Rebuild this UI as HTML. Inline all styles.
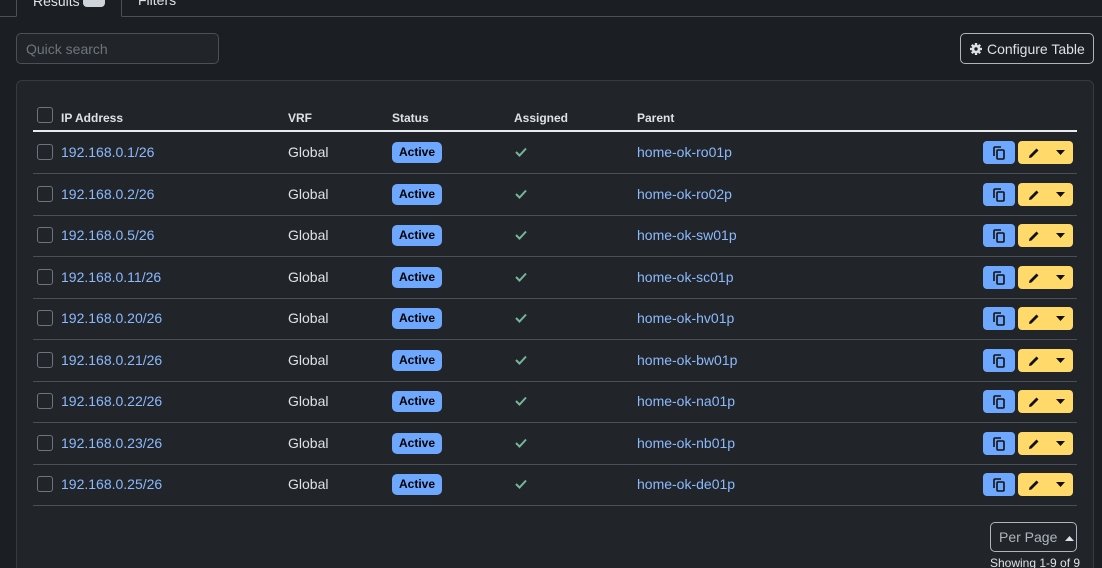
<!DOCTYPE html>
<html><head><meta charset="utf-8"><style>
*{box-sizing:border-box;margin:0;padding:0}
html,body{width:1102px;height:568px;overflow:hidden}
body{background:#1b1e22;font-family:"Liberation Sans",sans-serif;color:#dee2e6;position:relative;font-size:14px}
.tabline{position:absolute;left:0;top:16px;width:1102px;height:1px;background:#495057}
.tab{position:absolute;left:16px;top:-10px;width:106px;height:27px;border:1px solid #495057;border-bottom:1px solid #1b1e22;border-radius:4px 4px 0 0;background:#1b1e22}
.tab span{position:absolute;left:16px;top:2px;color:#dee2e6}
.badge9{position:absolute;left:66px;top:0px;width:22px;height:16px;background:#ced4da;border-radius:4px}
.tab2{position:absolute;left:138px;top:-8px;color:#dee2e6}
.search{position:absolute;left:16px;top:33px;width:203px;height:31px;border:1px solid #495057;border-radius:5px;background:#212529;color:#6c757d;padding:7px 9px;font-size:14px}
.cfg{position:absolute;left:960px;top:33px;width:134px;height:31px;border:1px solid #adb5bd;border-radius:5px;color:#dee2e6;padding:7px 0 0 26px;font-size:14px;white-space:nowrap}
.card{position:absolute;left:16px;top:80px;width:1078px;height:520px;background:#212529;border:1px solid #373b3e;border-radius:6px}
.cb{position:absolute;left:37px;width:16px;height:16px;border:1px solid #6c757d;border-radius:3px;background:#212529}
.h{position:absolute;top:111px;font-weight:bold;font-size:12px;color:#dee2e6}
.hl{position:absolute;left:33px;top:130px;width:1044px;height:2px;background:#e9ecef}
.rl{position:absolute;left:33px;width:1044px;height:1px;background:#495057}
.c{position:absolute;font-size:14px}
.ip{left:61px;color:#8bb9fe}
.par{left:637px;color:#8bb9fe}
.vrf{left:288px;color:#dee2e6}
.act{position:absolute;left:392px;width:50px;height:21px;background:#6ea8fe;color:#000;border-radius:5px;font-weight:bold;font-size:12px;text-align:center;line-height:21px}
.chk{position:absolute;left:515px}
.cp{position:absolute;left:983px;width:32px;height:23px;background:#6ea8fe;border-radius:4px}
.ed{position:absolute;left:1018px;width:55px;height:23px;background:#ffda6a;border-radius:4px}
.pp{position:absolute;left:990px;top:522px;width:87px;height:30px;border:1px solid #adb5bd;border-radius:5px;color:#adb5bd;padding:6px 0 0 8px;white-space:nowrap}
.show{position:absolute;left:990px;top:556px;font-size:12px;color:#dee2e6;white-space:nowrap}
</style></head><body>
<div class="tabline"></div>
<div class="tab"><span>Results</span><div class="badge9"></div></div>
<div class="tab2">Filters</div>
<div class="search">Quick search</div>
<div class="cfg"><svg style="position:absolute;left:9px;top:9px" width="12" height="12" viewBox="0 0 12 12"><circle cx="6" cy="6" r="4.2" fill="#dee2e6"/><g stroke="#dee2e6" stroke-width="2.4"><line x1="6" y1="0" x2="6" y2="12"/><line x1="0" y1="6" x2="12" y2="6"/><line x1="1.8" y1="1.8" x2="10.2" y2="10.2"/><line x1="10.2" y1="1.8" x2="1.8" y2="10.2"/></g><circle cx="6" cy="6" r="1.7" fill="#1b1e22"/></svg>Configure Table</div>
<div class="card"></div>
<div class="cb" style="top:107px"></div>
<div class="h" style="left:61px">IP Address</div>
<div class="h" style="left:288px">VRF</div>
<div class="h" style="left:392px">Status</div>
<div class="h" style="left:514px">Assigned</div>
<div class="h" style="left:637px">Parent</div>
<div class="hl"></div>
<div id="rows"></div>
<div class="pp">Per Page <svg style="margin-left:4px;vertical-align:middle" width="9" height="5" viewBox="0 0 9 5"><path d="M0 5 H9 L4.5 0Z" fill="#dee2e6"/></svg></div>
<div class="show">Showing 1-9 of 9</div>
<script>
var d=[["192.168.0.1/26","ro01p"],["192.168.0.2/26","ro02p"],["192.168.0.5/26","sw01p"],["192.168.0.11/26","sc01p"],["192.168.0.20/26","hv01p"],["192.168.0.21/26","bw01p"],["192.168.0.22/26","na01p"],["192.168.0.23/26","nb01p"],["192.168.0.25/26","de01p"]];
var h="";
d.forEach(function(r,i){var y=152+i*41.5;
h+='<div class="cb" style="top:'+(y-8)+'px"></div>';
h+='<div class="c ip" style="top:'+(y-8)+'px">'+r[0]+'</div>';
h+='<div class="c vrf" style="top:'+(y-8)+'px">Global</div>';
h+='<div class="act" style="top:'+(y-10)+'px">Active</div>';
h+='<svg class="chk" style="top:'+(y-5)+'px" width="12" height="10" viewBox="0 0 12 10"><path d="M1 5 L4.5 8.5 L11 1.5" fill="none" stroke="#75b798" stroke-width="2"/></svg>';
h+='<div class="c par" style="top:'+(y-8)+'px">home-ok-'+r[1]+'</div>';
h+='<div class="cp" style="top:'+(y-11)+'px"><svg style="position:absolute;left:10px;top:5px" width="13" height="14" viewBox="0 0 13 14"><path d="M1 10 V2 Q1 1 2 1 H8" fill="none" stroke="#111" stroke-width="1.6"/><rect x="4" y="4" width="7" height="9" rx="1" fill="#6ea8fe" stroke="#111" stroke-width="1.6"/></svg></div>';
h+='<div class="ed" style="top:'+(y-11)+'px"><svg style="position:absolute;left:10px;top:6px" width="12" height="12" viewBox="0 0 12 12"><path d="M1 11 L1.5 8.5 L8.5 1.5 L10.5 3.5 L3.5 10.5 Z" fill="#111"/></svg><svg style="position:absolute;left:38px;top:9px" width="9" height="5" viewBox="0 0 9 5"><path d="M0 0 H9 L4.5 5Z" fill="#111"/></svg></div>';
h+='<div class="rl" style="top:'+Math.round(y+21)+'px"></div>';
});
document.getElementById("rows").innerHTML=h;
</script>
</body></html>
